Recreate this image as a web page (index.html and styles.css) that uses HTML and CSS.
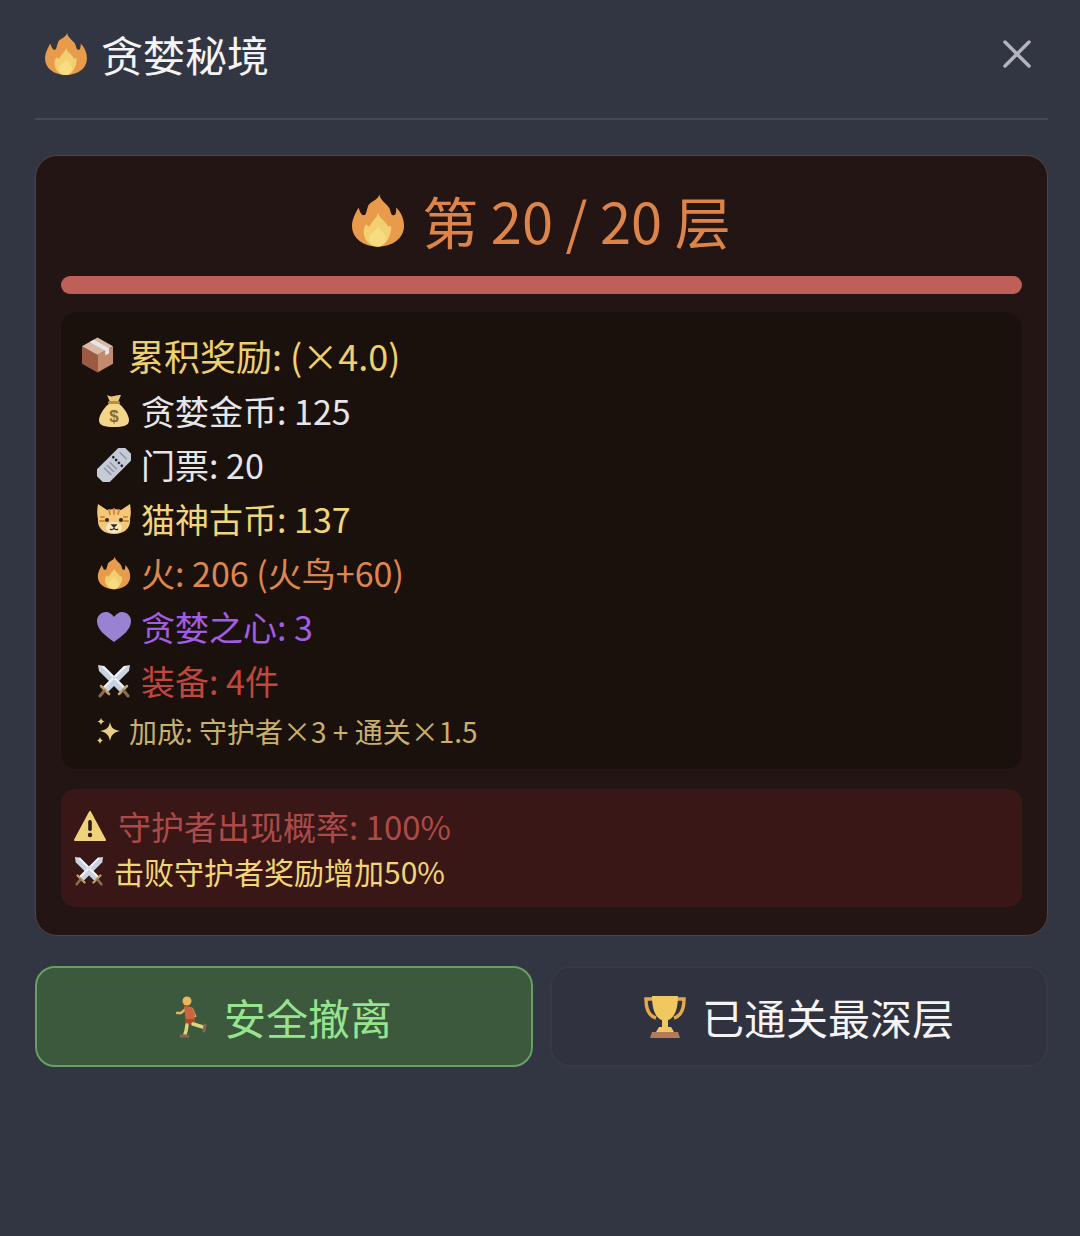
FILE: index.html
```html
<!DOCTYPE html>
<html lang="zh-CN">
<head>
<meta charset="utf-8">
<title>贪婪秘境</title>
<link rel="stylesheet" href="styles.css">
</head>
<body>
<svg class="defs" aria-hidden="true">
  <symbol id="fire" viewBox="0 0 40 42">
    <path fill="#e89b4a" d="M21 1c1 5 6 7 8 11 1 3 1 5 3 5 2 0 2-3 2-6 4 4 6 9 6 14 0 10-9 16-20 16S0 35 0 25c0-5 3-10 5-14 1 3 2 6 4 6 2 0 2-3 3-6 1-5 8-5 9-10z"/>
    <path fill="#f3d06f" d="M20 15c1 4 4 5 6 8 1 2 2 3 4 2 1 5-3 16-10 16S9 36 9 29c0-2 1-4 2-5 1 1 2 2 3 1 1-4 5-5 6-10z"/>
    <path fill="#f7dc82" d="M20 26c2 3 6 5 6 9 0 3-3 6-6 6s-7-3-7-6c0-4 5-5 7-9z"/>
  </symbol>
  <symbol id="box" viewBox="0 0 34 36">
    <path fill="#9c5a42" d="M1 9l16 9v18L1 27z"/>
    <path fill="#c48a6e" d="M33 9L17 18v18l16-9z"/>
    <path fill="#d9b9a4" d="M17 0l16 9-16 9L1 9z"/>
    <path fill="#e6e6ea" d="M9 4.500l16 9v5l4-2.300V11L13 2.300z"/>
  </symbol>
  <symbol id="bag" viewBox="0 0 32 34">
    <path fill="#e9c877" d="M9 1c2 1 4 2 7 1 3-1 5-1 7-1l-3 7h-8z"/>
    <path fill="#f4d68a" d="M12 9h8c5 3 11 12 11 17 0 6-6 7-15 7S1 32 1 26c0-5 6-14 11-17z"/>
    <rect x="10" y="7" width="12" height="3" rx="1.500" fill="#b98d45"/>
    <text x="16" y="28" text-anchor="middle" class="dollar">$</text>
  </symbol>
  <symbol id="ticket" viewBox="0 0 34 34">
    <g transform="rotate(45 17 17)">
      <rect x="8" y="-3" width="18" height="40" rx="3" fill="#c4cbd6"/>
      <circle cx="11" cy="12" r="1.400" fill="#2b2b2f"/><circle cx="15" cy="12" r="1.400" fill="#2b2b2f"/><circle cx="19" cy="12" r="1.400" fill="#2b2b2f"/><circle cx="23" cy="12" r="1.400" fill="#2b2b2f"/>
      <path stroke="#8e96a3" stroke-width="1.500" d="M12 18h10M12 22h10M12 26h10M12 4h10"/>
    </g>
  </symbol>
  <symbol id="cat" viewBox="0 0 34 32">
    <path fill="#f3c878" d="M1 1l9 6c4-1 10-1 14 0l9-6c1 5 1 11 0 15 1 9-6 15-16 15S0 25 1 16C0 12 0 6 1 1z"/>
    <path stroke="#d28a3a" stroke-width="2" stroke-linecap="round" fill="none" d="M17 6v5M12 7l1 4M22 7l-1 4M3 18h4M31 18h-4M4 14h3M30 14h-3"/>
    <circle cx="10" cy="17" r="2" fill="#33241a"/><circle cx="24" cy="17" r="2" fill="#33241a"/>
    <path fill="#f9e7c0" d="M17 19c5 0 8 3 8 6s-4 5-8 5-8-2-8-5 3-6 8-6z"/>
    <path stroke="#33241a" stroke-width="1.300" fill="none" d="M15 22h4l-2 2zM17 24v1c-1 2-3 2-4 1M17 25c1 2 3 2 4 1"/>
  </symbol>
  <symbol id="heart" viewBox="0 0 34 30">
    <path fill="#9a82d2" d="M17 30C9 24 0 18 0 9c0-5 4-9 9-9 3 0 6 2 8 5 2-3 5-5 8-5 5 0 9 4 9 9 0 9-9 15-17 21z"/>
  </symbol>
  <symbol id="swords" viewBox="0 0 34 34">
    <path fill="#c9d3df" d="M33 1l-1 6L11 28l-5-5L27 2z"/>
    <path fill="#c9d3df" d="M1 1l1 6 21 21 5-5L7 2z"/>
    <path fill="#eef2f6" d="M30 2L8 24l-2-1L27 2zM4 2l22 22 2-1L7 2z"/>
    <path stroke="#c4a267" stroke-width="2.500" stroke-linecap="round" d="M4 22l8 8M30 22l-8 8"/>
    <path stroke="#8c6a50" stroke-width="3" stroke-linecap="round" d="M7 27l-4 5M27 27l4 5"/>
  </symbol>
  <symbol id="sparkle" viewBox="0 0 26 28">
    <path fill="#e8cf82" d="M15 5c1 6 4 8 10 9-6 1-9 4-10 10-1-6-4-9-10-10 6-1 9-3 10-9z"/>
    <path fill="#e8cf82" d="M6 1c.5 2 1.500 3 3.500 3.500C7.500 5 6.500 6 6 8c-.5-2-1.500-3-3.500-3.500C4.500 4 5.500 3 6 1zM5 20c.4 2 1.300 3 3 3.500-1.700.5-2.600 1.500-3 3.500-.4-2-1.300-3-3-3.500 1.700-.5 2.600-1.500 3-3.500z"/>
  </symbol>
  <symbol id="warn" viewBox="0 0 32 32">
    <path fill="#f0d27a" stroke="#f0d27a" stroke-width="2" stroke-linejoin="round" d="M16 2L31 30H1z"/>
    <rect x="14.200" y="10" width="3.600" height="11" rx="1.800" fill="#2a1a18"/>
    <circle cx="16" cy="25" r="2.200" fill="#2a1a18"/>
  </symbol>
  <symbol id="runner" viewBox="0 0 32 42">
    <circle cx="11" cy="5" r="4.500" fill="#e8b65c"/>
    <path stroke="#e8b65c" stroke-width="2.500" stroke-linecap="round" fill="none" d="M11 12L5 17 1 17M16 13l3 7"/>
    <path fill="#c9663f" d="M8 10l8 1 3 7-1 8H10l-1-8z"/>
    <path fill="#a8482c" d="M9 23h10l1 5-5 1-2-1-4 1z"/>
    <path stroke="#dcd47c" stroke-width="3.500" stroke-linecap="round" stroke-linejoin="round" fill="none" d="M11 29l-1 6-1 3M17 28l10 3"/>
    <path stroke="#8a6450" stroke-width="3" stroke-linecap="round" d="M5 40h7M29 29l-1 6"/>
  </symbol>
  <symbol id="trophy" viewBox="0 0 42 42">
    <path fill="none" stroke="#e3a94c" stroke-width="3.500" d="M10 3H2c0 9 3 17 10 19M32 3h8c0 9-3 17-10 19"/>
    <path fill="#f0c85f" d="M8 0h26c0 12-3 22-10 24v7h3l3 5H12l3-5h3v-7C11 22 8 12 8 0z"/>
    <path fill="#b57a5c" d="M8 36h26l2 6H6z"/>
  </symbol>
</svg>

<main class="page">
  <header class="header">
    <h1 class="header-title"><svg class="icon icon-head"><use href="#fire"/></svg><span>贪婪秘境</span></h1>
    <button class="close" aria-label="关闭"><svg viewBox="0 0 28 28"><path d="M2 2l24 24M26 2L2 26"/></svg></button>
  </header>

  <section class="card">
    <h2 class="floor"><svg class="icon icon-floor"><use href="#fire"/></svg><span>第 20 / 20 层</span></h2>
    <div class="progress"></div>

    <div class="rewards">
      <div class="rewards-title"><svg class="icon icon-box"><use href="#box"/></svg><span>累积奖励: (×4.0)</span></div>
      <div class="row row-white"><svg class="icon"><use href="#bag"/></svg><span>贪婪金币: 125</span></div>
      <div class="row row-white"><svg class="icon"><use href="#ticket"/></svg><span>门票: 20</span></div>
      <div class="row row-gold"><svg class="icon"><use href="#cat"/></svg><span>猫神古币: 137</span></div>
      <div class="row row-fire"><svg class="icon"><use href="#fire"/></svg><span>火: 206 (火鸟+60)</span></div>
      <div class="row row-purple"><svg class="icon"><use href="#heart"/></svg><span>贪婪之心: 3</span></div>
      <div class="row row-red"><svg class="icon"><use href="#swords"/></svg><span>装备: 4件</span></div>
      <div class="bonus"><svg class="icon icon-sparkle"><use href="#sparkle"/></svg><span>加成: 守护者×3 + 通关×1.5</span></div>
    </div>

    <div class="warning">
      <div class="warning-title"><svg class="icon icon-warn"><use href="#warn"/></svg><span>守护者出现概率: 100%</span></div>
      <div class="warning-sub"><svg class="icon icon-sub"><use href="#swords"/></svg><span>击败守护者奖励增加50%</span></div>
    </div>
  </section>

  <div class="actions">
    <button class="btn btn-leave"><svg class="icon icon-btn"><use href="#runner"/></svg><span>安全撤离</span></button>
    <button class="btn btn-done"><svg class="icon icon-btn icon-trophy"><use href="#trophy"/></svg><span>已通关最深层</span></button>
  </div>
</main>
</body>
</html>
```
FILE: styles.css
```css
* { box-sizing: border-box; }

html, body {
  margin: 0;
  height: 100%;
}

body {
  background: #323642;
  font-family: "Noto Sans CJK SC", "Noto Sans", sans-serif;
  font-weight: 400;
  color: #f2f2f2;
}

.defs {
  position: absolute;
  width: 0;
  height: 0;
}

.dollar {
  font-family: "Liberation Sans", sans-serif;
  font-size: 17px;
  font-weight: 700;
  fill: #8a6a2c;
}

.page {
  padding: 0 32px 0 35px;
}

.icon {
  flex: none;
  display: block;
  width: 34px;
  height: 34px;
}

/* header */
.header {
  height: 120px;
  border-bottom: 2px solid #454956;
  display: flex;
  align-items: center;
  justify-content: space-between;
  padding: 0 17px 11px 10px;
}

.header-title {
  margin: 0;
  display: flex;
  align-items: center;
  gap: 14px;
  font-size: 42px;
  font-weight: 400;
  line-height: 60px;
  color: #f4f4f4;
}

.icon-head {
  width: 42px;
  height: 44px;
}

.close {
  background: none;
  border: 0;
  padding: 0;
  width: 28px;
  height: 28px;
}

.close svg {
  display: block;
  width: 28px;
  height: 28px;
}

.close path {
  stroke: #b2b4ba;
  stroke-width: 3.500;
  stroke-linecap: round;
  fill: none;
}

/* card */
.card {
  margin-top: 35px;
  height: 781px;
  background: #231513;
  border: 1.500px solid #5c4034;
  border-radius: 22px;
  padding: 0 25px;
}

.floor {
  margin: 0;
  height: 120px;
  display: flex;
  align-items: center;
  justify-content: center;
  gap: 18px;
  font-size: 56px;
  font-weight: 400;
  line-height: 70px;
  color: #dd844a;
  padding-top: 8px;
}

.icon-floor {
  width: 52px;
  height: 55px;
}

.progress {
  height: 18px;
  border-radius: 9px;
  background: #bf5f5a;
}

/* rewards */
.rewards {
  margin-top: 18px;
  height: 457px;
  background: #1a110d;
  border-radius: 16px;
  padding: 14px 20px 0;
}

.rewards-title {
  height: 58px;
  display: flex;
  align-items: center;
  gap: 14px;
  font-size: 36px;
  line-height: 58px;
  color: #efd06f;
}

.icon-box {
  width: 33px;
  height: 36px;
}

.row {
  height: 54px;
  display: flex;
  align-items: center;
  gap: 10px;
  margin-left: 16px;
  font-size: 34px;
  line-height: 54px;
}

.row-white { color: #e6e6ea; }
.row-gold { color: #f0d678; }
.row-fire { color: #df864e; }
.row-purple { color: #a35de2; }
.row-red { color: #c0463e; }

.bonus {
  height: 46px;
  display: flex;
  align-items: center;
  gap: 8px;
  margin-left: 14px;
  font-size: 28px;
  line-height: 46px;
  color: #c8b06e;
}

.icon-sparkle {
  width: 26px;
  height: 28px;
}

/* warning */
.warning {
  margin-top: 20px;
  height: 118px;
  background: #391716;
  border-radius: 14px;
  padding: 14px 13px 0;
}

.warning-title {
  height: 46px;
  display: flex;
  align-items: center;
  gap: 12px;
  font-size: 33px;
  line-height: 46px;
  color: #ac4a48;
}

.icon-warn {
  width: 32px;
  height: 32px;
}

.warning-sub {
  height: 44px;
  display: flex;
  align-items: center;
  gap: 10px;
  font-size: 30px;
  line-height: 44px;
  color: #f0d678;
}

.icon-sub {
  width: 30px;
  height: 30px;
}

/* buttons */
.actions {
  margin-top: 30px;
  display: flex;
  gap: 17px;
}

.btn {
  flex: 1;
  height: 101px;
  border-radius: 20px;
  display: flex;
  align-items: center;
  justify-content: center;
  gap: 16px;
  font-family: inherit;
  font-size: 42px;
  font-weight: 400;
  line-height: 60px;
  padding: 0;
}

.btn-leave {
  background: #3c583d;
  border: 2px solid #689f63;
  color: #97e48e;
}

.btn-done {
  background: #30323f;
  border: 2px solid #363946;
  color: #f4f4f4;
}

.icon-btn {
  width: 32px;
  height: 42px;
}

.icon-trophy {
  width: 42px;
  height: 42px;
}
```
